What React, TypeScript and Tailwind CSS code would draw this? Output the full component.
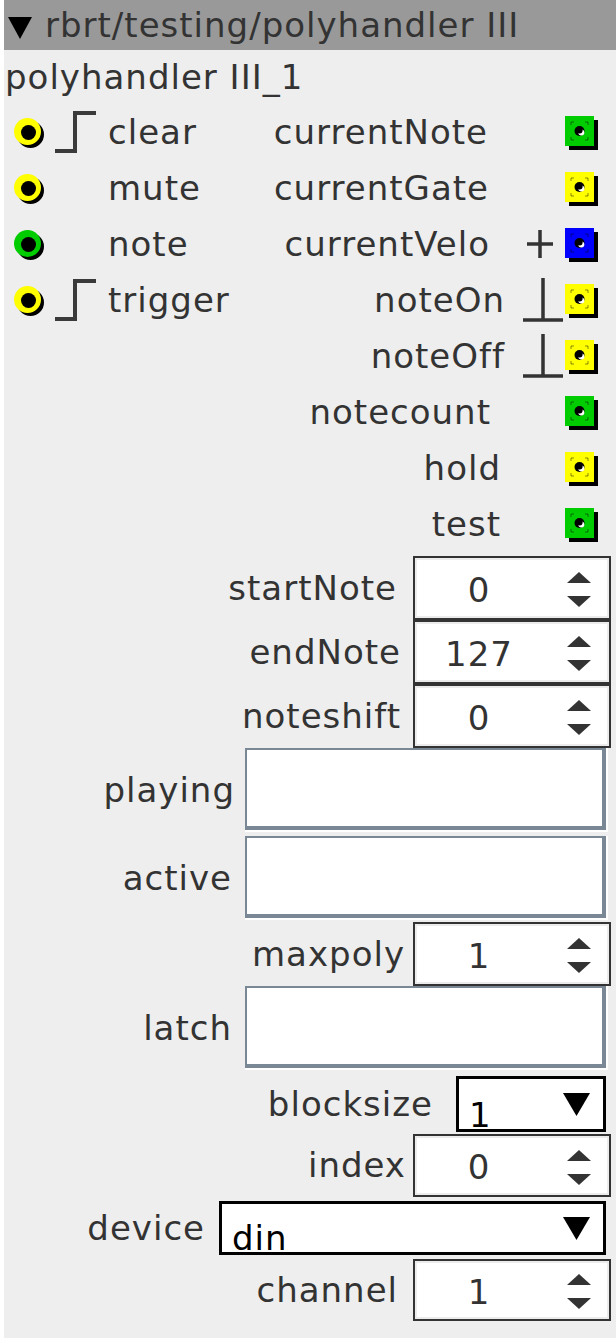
import React from "react";

const F = "font-['DejaVu_Sans',sans-serif] tracking-[1px] text-[34px] text-[#333333]";

function Inlet({ c }: { c: string }) {
  return (
    <svg width="38" height="38" viewBox="0 0 38 38" className="shrink-0">
      <circle cx="21.5" cy="21.5" r="13.5" fill="#000" />
      <circle cx="18.5" cy="18.5" r="13.5" fill={c} />
      <circle cx="19.5" cy="19.5" r="7.5" fill="#000" />
    </svg>
  );
}

function Step() {
  return (
    <svg width="44" height="44" viewBox="0 0 44 44" className="shrink-0">
      <path d="M2 41 H22 V3 H43" stroke="#3a3a3a" strokeWidth="4" fill="none" />
    </svg>
  );
}

function Outlet({ c }: { c: string }) {
  return (
    <svg width="34" height="36" viewBox="0 0 34 36" className="shrink-0">
      <rect x="4" y="6" width="29" height="30" fill="#000" />
      <rect x="0" y="2" width="29" height="30" fill={c} />
      <g stroke="#000" strokeOpacity="0.45" strokeWidth="1" fill="none">
        <path d="M6 11 V8 H9" />
        <path d="M20 8 H23 V11" />
        <path d="M6 23 V26 H9" />
        <path d="M20 26 H23 V23" />
      </g>
      <circle cx="14.5" cy="17" r="5" fill="#000" />
      <circle cx="16.3" cy="18.6" r="3" fill="#fff" />
      <circle cx="14.6" cy="16.6" r="3" fill="#000" />
    </svg>
  );
}

function Plus() {
  return (
    <svg width="30" height="28" viewBox="0 0 30 28" className="shrink-0">
      <path d="M15 0 V28 M2 14 H28" stroke="#333" strokeWidth="3.5" fill="none" />
    </svg>
  );
}

function Bottom() {
  return (
    <svg width="42" height="46" viewBox="0 0 42 46" className="shrink-0">
      <path d="M21 1 V43 M1 43 H41" stroke="#333" strokeWidth="3.5" fill="none" />
    </svg>
  );
}

type IORow = {
  inlet?: string;
  step?: boolean;
  inLabel?: string;
  out: string;
  outColor: string;
  icon?: "plus" | "bottom";
  mr: number;
};

const rows: IORow[] = [
  { inlet: "#ffff00", step: true, inLabel: "clear", out: "currentNote", outColor: "#00cc00", mr: 32 },
  { inlet: "#ffff00", inLabel: "mute", out: "currentGate", outColor: "#ffff00", mr: 31 },
  { inlet: "#00cc00", inLabel: "note", out: "currentVelo", outColor: "#0000ff", icon: "plus", mr: 30 },
  { inlet: "#ffff00", step: true, inLabel: "trigger", out: "noteOn", outColor: "#ffff00", icon: "bottom", mr: 15 },
  { out: "noteOff", outColor: "#ffff00", icon: "bottom", mr: 15 },
  { out: "notecount", outColor: "#00cc00", mr: 29 },
  { out: "hold", outColor: "#ffff00", mr: 19 },
  { out: "test", outColor: "#00cc00", mr: 19 },
];

function UpTri() {
  return (
    <svg width="24" height="11" viewBox="0 0 24 11">
      <path d="M12 0 L24 11 H0 Z" fill="#333" />
    </svg>
  );
}
function DownTri() {
  return (
    <svg width="24" height="11" viewBox="0 0 24 11">
      <path d="M0 0 H24 L12 11 Z" fill="#333" />
    </svg>
  );
}

function Spinner({ v, h = 64 }: { v: string; h?: number }) {
  return (
    <div
      className={`w-[198px] border-2 border-[#333333] bg-white flex shrink-0 ${h === 64 ? "h-[64px]" : h === 63 ? "h-[63px]" : "h-[62px]"}`}
    >
      <div className="flex-1 flex border-2 border-[#ececec]">
        <div className="w-[124px] flex items-center justify-center pt-[4px]">{v}</div>
        <div className="flex-1 flex flex-col items-center justify-center gap-[13px] pl-[10px] pt-[3px]">
          <UpTri />
          <DownTri />
        </div>
      </div>
    </div>
  );
}

function Field() {
  return (
    <div className="w-[363px] h-[84px] border-r-2 border-b-2 border-white shrink-0">
      <div className="w-full h-full bg-white border-t-2 border-l-2 border-r-[4px] border-b-[4px] border-[#7a8794]" />
    </div>
  );
}

function DropTri() {
  return (
    <svg width="27" height="23" viewBox="0 0 27 23" className="shrink-0">
      <path d="M0 0 H27 L13.5 23 Z" fill="#000" />
    </svg>
  );
}

function Dropdown({ v, w }: { v: string; w: string }) {
  return (
    <div className={`${w} border-[3px] border-black bg-white flex justify-between shrink-0 pl-[10px] pr-[13px]`}>
      <span className="self-end leading-none text-black mb-[-3px]">{v}</span>
      <div className="self-center">
        <DropTri />
      </div>
    </div>
  );
}

export default function App() {
  return (
    <div className={`w-[616px] h-[1344px] bg-white ${F}`}>
      <div className="ml-[4px] w-[612px] h-[1338px] bg-[#eeeeee] flex flex-col">
        {/* header */}
        <div className="h-[50px] bg-[#999999] flex items-center shrink-0">
          <svg width="24" height="22" viewBox="0 0 24 22" className="ml-[4px] mt-[6px]">
            <path d="M0 0 H24 L12 22 Z" fill="#000" />
          </svg>
          <span className="ml-[13px] leading-none">rbrt/testing/polyhandler III</span>
        </div>
        {/* title */}
        <div className="h-[54px] flex items-center pl-[1px] shrink-0">
          <span className="leading-none">polyhandler III_1</span>
        </div>
        {/* io rows */}
        {rows.map((r, i) => (
          <div key={i} className="h-[56px] flex items-center justify-between shrink-0">
            <div className="flex items-center pl-[5px]">
              {r.inlet ? (
                <>
                  <Inlet c={r.inlet} />
                  <div className="w-[44px] ml-[6px] flex">{r.step ? <Step /> : null}</div>
                  <span className="ml-[11px] leading-none">{r.inLabel}</span>
                </>
              ) : null}
            </div>
            <div className="flex items-center pr-[17px]">
              <span className="leading-none" style={{ marginRight: r.mr }}>
                {r.out}
              </span>
              <div className="w-[45px] flex items-center">
                {r.icon === "plus" ? (
                  <div className="ml-[5px]">
                    <Plus />
                  </div>
                ) : r.icon === "bottom" ? (
                  <div className="ml-[2px]">
                    <Bottom />
                  </div>
                ) : null}
              </div>
              <Outlet c={r.outColor} />
            </div>
          </div>
        ))}
        {/* params */}
        <div className="flex flex-col mt-[4px]">
          <div className="flex items-center justify-end pr-[5px]">
            <span className="mr-[16px]">startNote</span>
            <Spinner v="0" />
          </div>
          <div className="flex items-center justify-end pr-[5px]">
            <span className="mr-[12px]">endNote</span>
            <Spinner v="127" />
          </div>
          <div className="flex items-center justify-end pr-[5px]">
            <span className="mr-[12px]">noteshift</span>
            <Spinner v="0" />
          </div>
          <div className="flex items-center justify-end pr-[8px]">
            <span className="mr-[10px]">playing</span>
            <Field />
          </div>
          <div className="flex items-center justify-end pr-[8px] mt-[4px]">
            <span className="mr-[13px]">active</span>
            <Field />
          </div>
          <div className="flex items-center justify-end pr-[5px] mt-[2px]">
            <span className="mr-[8px]">maxpoly</span>
            <Spinner v="1" />
          </div>
          <div className="flex items-center justify-end pr-[8px]">
            <span className="mr-[13px]">latch</span>
            <Field />
          </div>
          <div className="flex items-center justify-end pr-[10px] mt-[6px]">
            <span className="mr-[23px]">blocksize</span>
            <Dropdown v="1" w="w-[150px] h-[56px]" />
          </div>
          <div className="flex items-center justify-end pr-[5px] mt-[2px]">
            <span className="mr-[7px]">index</span>
            <Spinner v="0" h={63} />
          </div>
          <div className="flex items-center justify-end pr-[10px] mt-[4px]">
            <span className="mr-[14px]">device</span>
            <Dropdown v="din" w="w-[387px] h-[54px]" />
          </div>
          <div className="flex items-center justify-end pr-[5px] mt-[4px]">
            <span className="mr-[15px]">channel</span>
            <Spinner v="1" h={62} />
          </div>
        </div>
      </div>
    </div>
  );
}
